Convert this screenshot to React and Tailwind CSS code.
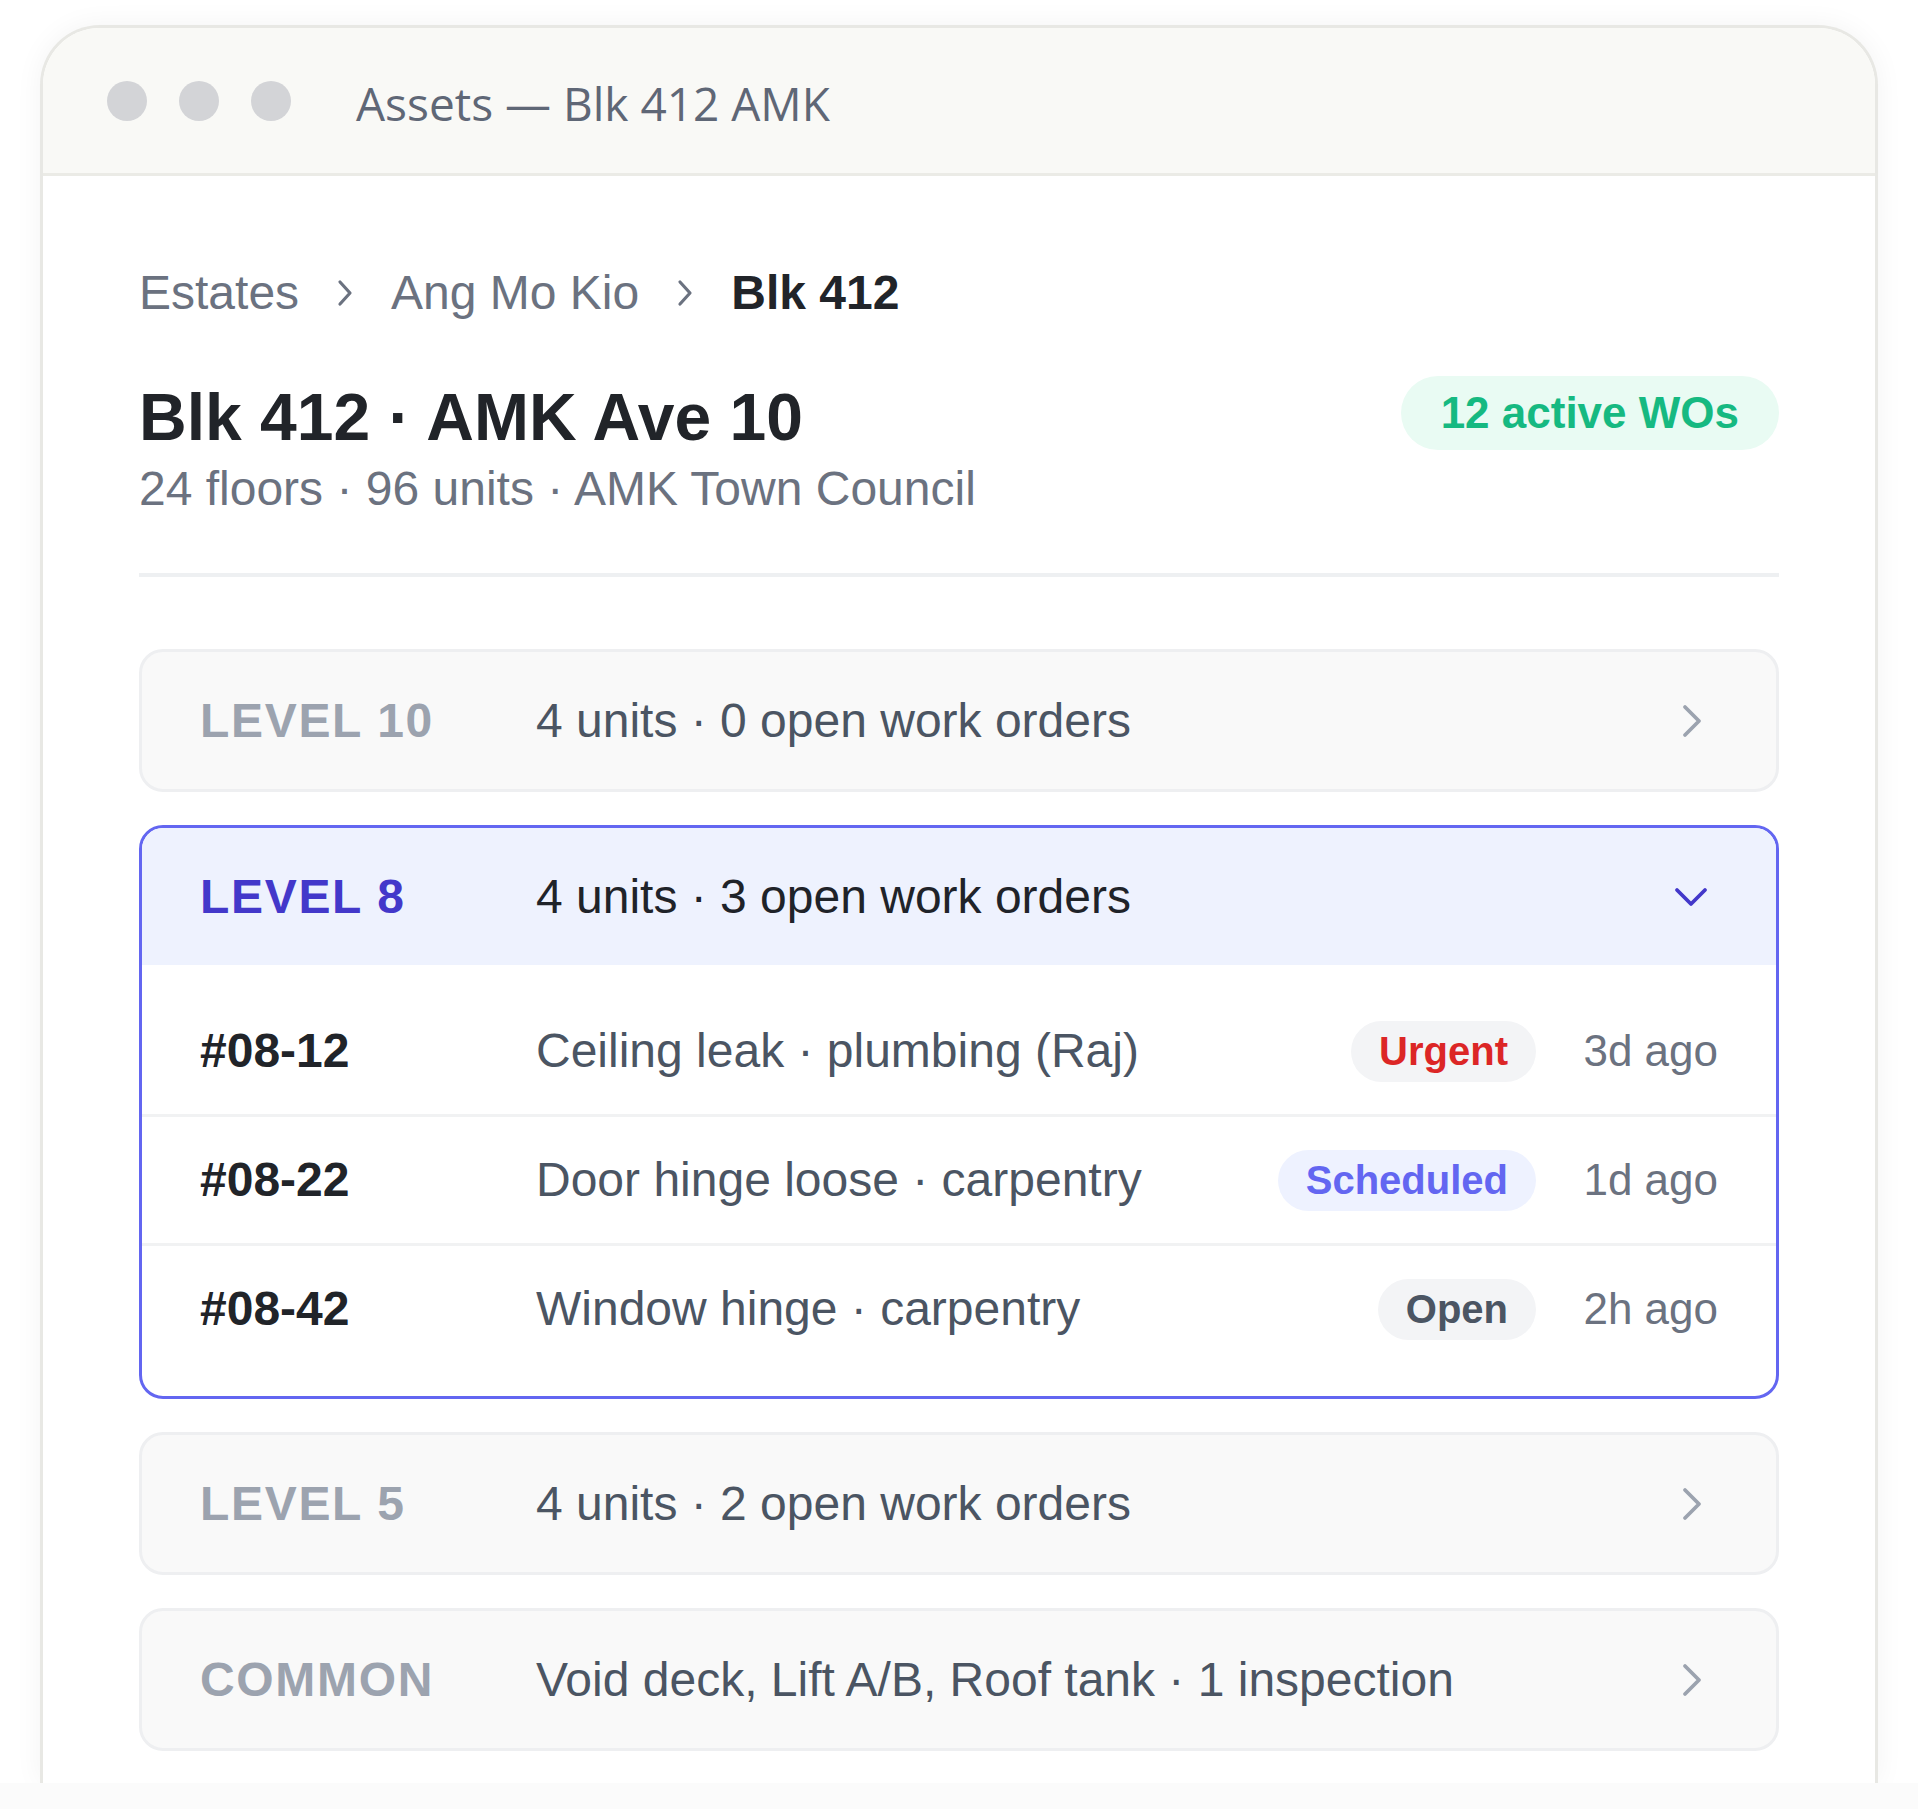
import { Fragment } from 'react'

const sans = "font-['Liberation_Sans',Arial,sans-serif]"

const levels = [
  { label: 'LEVEL 10', summary: '4 units · 0 open work orders' },
  {
    label: 'LEVEL 8',
    summary: '4 units · 3 open work orders',
    open: true,
    units: [
      { id: '#08-12', issue: 'Ceiling leak · plumbing (Raj)', status: 'Urgent', when: '3d ago' },
      { id: '#08-22', issue: 'Door hinge loose · carpentry', status: 'Scheduled', when: '1d ago' },
      { id: '#08-42', issue: 'Window hinge · carpentry', status: 'Open', when: '2h ago' },
    ],
  },
  { label: 'LEVEL 5', summary: '4 units · 2 open work orders' },
  { label: 'COMMON', summary: 'Void deck, Lift A/B, Roof tank · 1 inspection' },
]

const statusStyles = {
  Urgent: 'bg-[#f3f4f6] text-[#dc2626]',
  Scheduled: 'bg-[#eef2ff] text-[#6366f1]',
  Open: 'bg-[#f3f4f6] text-[#4b5563]',
}

function Crumb() {
  return (
    <svg width="16" height="28" viewBox="0 0 16 28" fill="none" className="shrink-0">
      <polyline points="3,3 13,14 3,25" stroke="#6b7280" strokeWidth="3.2" strokeLinecap="round" strokeLinejoin="round" />
    </svg>
  )
}

function ArrowRight() {
  return (
    <svg width="20" height="34" viewBox="0 0 20 34" fill="none" className="shrink-0 mr-[16px]">
      <polyline points="3,3 17,17 3,31" stroke="#9ca3af" strokeWidth="3.8" strokeLinecap="round" strokeLinejoin="round" />
    </svg>
  )
}

function ArrowDown() {
  return (
    <svg width="34" height="20" viewBox="0 0 34 20" fill="none" className="shrink-0 mr-[10px]">
      <polyline points="3,3 17,17 31,3" stroke="#4338ca" strokeWidth="3.8" strokeLinecap="round" strokeLinejoin="round" />
    </svg>
  )
}

function UnitRow({ unit, last }) {
  return (
    <div className={`flex items-center px-[58px] ${last ? 'h-[126px]' : 'h-[129px] border-b-[3px] border-[#f1f2f3]'}`}>
      <div className="w-[336px] shrink-0 text-[48px] leading-[56px] font-bold text-[#212429]">{unit.id}</div>
      <div className="flex-1 text-[48px] leading-[56px] text-[#4b5563]">{unit.issue}</div>
      <span className={`h-[61px] px-[28px] rounded-full flex items-center text-[40px] leading-none font-bold ${statusStyles[unit.status]}`}>
        {unit.status}
      </span>
      <div className="w-[182px] shrink-0 text-right text-[44px] leading-[52px] text-[#6b7280]">{unit.when}</div>
    </div>
  )
}

function LevelCard({ level }) {
  if (level.open) {
    return (
      <div className="rounded-[24px] border-[3px] border-[#6366f1] overflow-hidden bg-white">
        <div className="h-[137px] bg-[#eef2fe] flex items-center px-[58px]">
          <div className="w-[336px] shrink-0 text-[48px] leading-[56px] font-bold tracking-[0.035em] text-[#4338ca]">{level.label}</div>
          <div className="flex-1 text-[48px] leading-[56px] text-[#1f2329]">{level.summary}</div>
          <ArrowDown />
        </div>
        <div className="pt-[23px] pb-[24px]">
          {level.units.map((u, i) => (
            <UnitRow key={u.id} unit={u} last={i === level.units.length - 1} />
          ))}
        </div>
      </div>
    )
  }
  return (
    <div className="h-[143px] rounded-[24px] border-[3px] border-[#eeeff1] bg-[#f9f9f9] flex items-center px-[58px]">
      <div className="w-[336px] shrink-0 text-[48px] leading-[56px] font-bold tracking-[0.035em] text-[#9ca3af]">{level.label}</div>
      <div className="flex-1 text-[48px] leading-[56px] text-[#4b5563]">{level.summary}</div>
      <ArrowRight />
    </div>
  )
}

export default function App() {
  const crumbs = ['Estates', 'Ang Mo Kio', 'Blk 412']

  return (
    <div className="w-[1918px] h-[1809px] bg-white overflow-hidden flex flex-col">
      <div className="pt-[25px] px-[40px]">
        <div className="h-[1758px] rounded-t-[60px] border-[3px] border-b-0 border-[#e8e8e4] bg-white overflow-hidden shadow-[0_0_28px_rgba(0,0,0,0.05)]">
          {/* Window chrome */}
          <div className="h-[148px] bg-[#f9f9f6] border-b-[3px] border-[#ebebe6] flex items-center pl-[64px]">
            <div className="flex gap-[32px]">
              <span className="w-[40px] h-[40px] rounded-full bg-[#d3d4d7]" />
              <span className="w-[40px] h-[40px] rounded-full bg-[#d3d4d7]" />
              <span className="w-[40px] h-[40px] rounded-full bg-[#d3d4d7]" />
            </div>
            <div className="ml-[65px] mt-[4px] font-['Open_Sans',sans-serif] text-[46px] leading-none text-[#5f6776]">
              Assets — Blk 412 AMK
            </div>
          </div>

          {/* Content */}
          <div className={`${sans} px-[96px] pt-[89px]`}>
            <nav className="h-[56px] flex items-center gap-[38px] text-[48px] leading-[56px]">
              {crumbs.map((c, i) => (
                <Fragment key={c}>
                  {i > 0 && <Crumb />}
                  <span className={i === crumbs.length - 1 ? 'font-bold text-[#212429]' : 'text-[#6b7280]'}>{c}</span>
                </Fragment>
              ))}
            </nav>

            <div className="mt-[55px] flex items-start justify-between">
              <div className="pt-[5px]">
                <h1 className="text-[66px] leading-[72px] font-bold text-[#212429]">Blk 412 · AMK Ave 10</h1>
                <p className="mt-[8px] text-[48px] leading-[56px] text-[#6b7280]">24 floors · 96 units · AMK Town Council</p>
              </div>
              <span className="h-[74px] px-[40px] rounded-full bg-[#e9fbf3] text-[#16b981] text-[44px] leading-none font-bold flex items-center">
                12 active WOs
              </span>
            </div>

            <div className="mt-[56px] h-[4px] bg-[#eef0f2]" />

            <div className="mt-[72px] flex flex-col gap-[33px]">
              {levels.map(l => (
                <LevelCard key={l.label} level={l} />
              ))}
            </div>
          </div>
        </div>
      </div>
      <div className="flex-1 bg-[#fbfbfb]" />
    </div>
  )
}
